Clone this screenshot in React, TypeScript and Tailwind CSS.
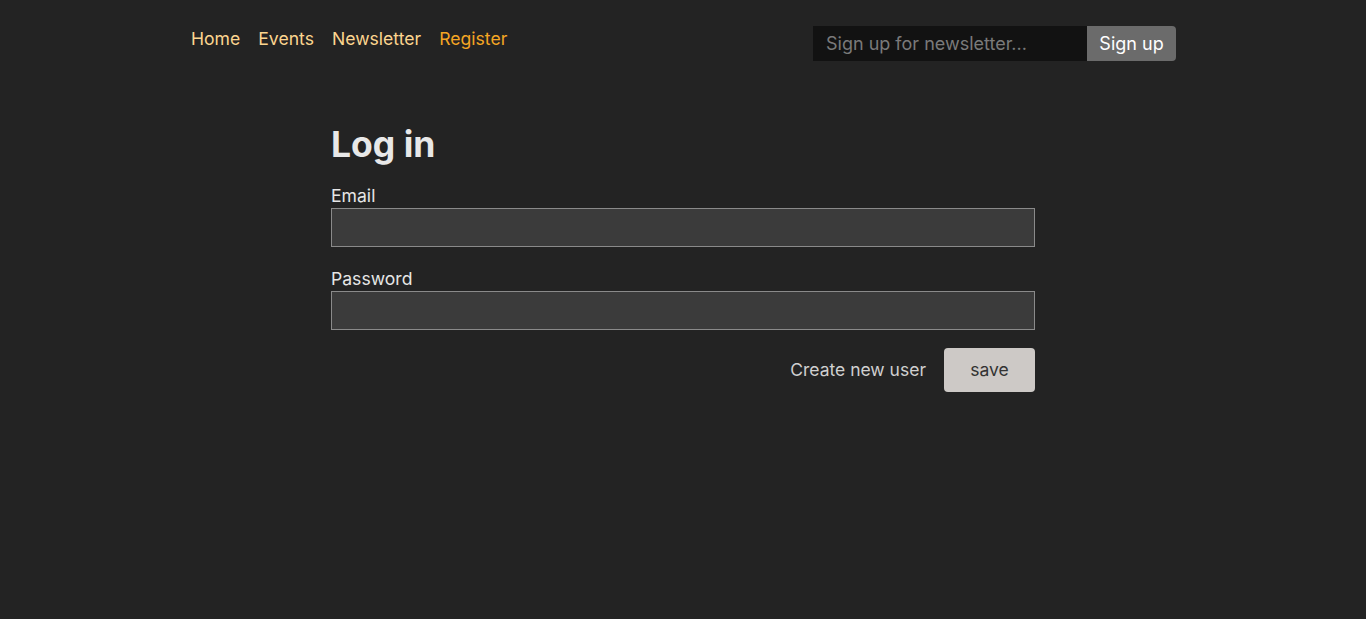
import React from "react";

export default function App() {
  return (
    <div className="min-h-[619px] bg-[#232323] text-[#e6e6e6]" style={{ fontFamily: "Inter, 'Noto Sans', sans-serif" }}>
      <div className="mx-auto w-[986px] pt-[26px]">
        <header className="flex items-start justify-between">
          <nav className="flex gap-[18px] pl-[1px] pt-[1px] text-[17.6px] leading-[24px]">
            <a className="text-[#fcd58f]">Home</a>
            <a className="text-[#fcd58f]">Events</a>
            <a className="text-[#fcd58f]">Newsletter</a>
            <a className="text-[#f5a623]">Register</a>
          </nav>
          <form className="flex h-[35px]">
            <input
              className="w-[274px] bg-[#121212] px-[13px] text-[18px] text-[#ddd] placeholder:text-[#7a7a7a] outline-none"
              placeholder="Sign up for newsletter..."
            />
            <button type="button" className="w-[89px] rounded-r-[4px] bg-[#6b6b6b] text-[18px] text-white">
              Sign up
            </button>
          </form>
        </header>
        <main className="mx-auto mt-[62px] w-[704px]">
          <h1 className="text-[35.5px] font-bold leading-[44px] text-[#e8e8e8]">Log in</h1>
          <div className="mt-[18px] flex flex-col">
            <label className="text-[17.6px] leading-[22px] text-[#e6e6e6]">Email</label>
            <input className="mt-[1px] h-[39px] border border-[#8a8a8a] bg-[#3b3b3b] px-2 text-[#eee] outline-none" />
            <label className="mt-[21px] text-[17.6px] leading-[22px] text-[#e6e6e6]">Password</label>
            <input type="password" className="mt-[1px] h-[39px] border border-[#8a8a8a] bg-[#3b3b3b] px-2 text-[#eee] outline-none" />
          </div>
          <div className="mt-[18px] flex items-center justify-end gap-[18px]">
            <a className="text-[17.5px] text-[#d0d0d0]">Create new user</a>
            <button className="h-[44px] w-[91px] rounded-[4px] bg-[#cdc9c6] text-[17.5px] text-[#333]">save</button>
          </div>
        </main>
      </div>
    </div>
  );
}
